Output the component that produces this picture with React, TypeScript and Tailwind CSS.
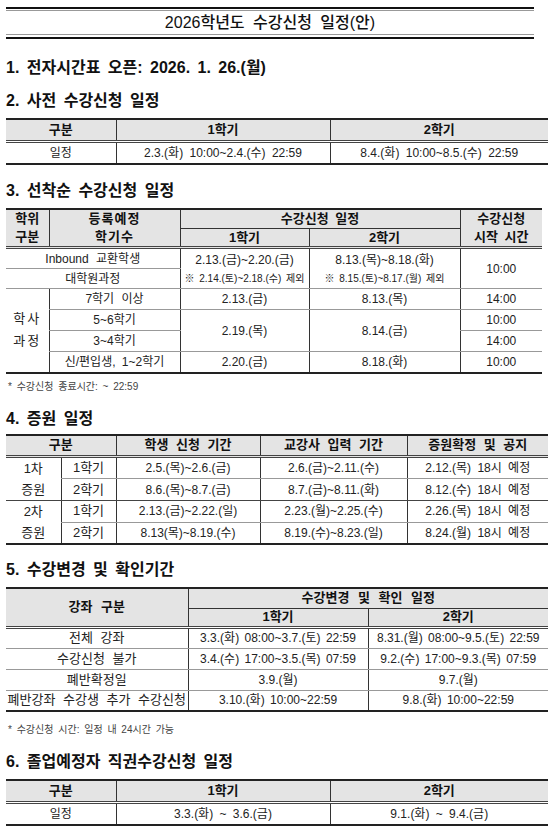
import React from "react";

const F = "font-['Liberation_Sans','Noto_Sans_CJK_KR',sans-serif]";

const TH = "bg-[#e4e4e4] font-bold text-[#111] text-[13px] leading-[16px] text-center align-middle p-0";
const TD = "text-center align-middle p-0 text-[#222] text-[12px] leading-[16px]";
const VL = "border-l border-l-[#333]";
const HB = "border-b-[3px] border-double border-b-[#444]";
const GB = "border-b border-b-[#999]";

function Heading({ children, mt }: { children: React.ReactNode; mt: string }) {
  return (
    <div className={`${mt} h-[20px] leading-[20px] text-[16px] font-semibold text-[#111] [word-spacing:3px]`}>
      {children}
    </div>
  );
}

function Note({ children, mt }: { children: React.ReactNode; mt: string }) {
  return (
    <div className={`${mt} h-[14px] leading-[14px] text-[10px] text-[#444] pl-[2px] [word-spacing:2px]`}>{children}</div>
  );
}

function SimpleTable({ mt, a, b }: { mt: string; a: string; b: string }) {
  return (
    <table className={`${mt} w-[542px] table-fixed border-collapse border-t-2 border-b-2 border-t-[#222] border-b-[#222]`}>
      <colgroup>
        <col className="w-[110px]" />
        <col className="w-[214px]" />
        <col className="w-[218px]" />
      </colgroup>
      <tbody>
        <tr className="h-[22px]">
          <th className={`${TH} ${HB}`}>구분</th>
          <th className={`${TH} ${HB} ${VL}`}>1학기</th>
          <th className={`${TH} ${HB} ${VL}`}>2학기</th>
        </tr>
        <tr className="h-[23px]">
          <td className={TD}>일정</td>
          <td className={`${TD} ${VL} [word-spacing:3px]`}>{a}</td>
          <td className={`${TD} ${VL} [word-spacing:3px]`}>{b}</td>
        </tr>
      </tbody>
    </table>
  );
}

function Table3() {
  return (
    <table className="mt-[7px] w-[536px] table-fixed border-collapse border-t-2 border-b-2 border-t-[#222] border-b-[#222]">
      <colgroup>
        <col className="w-[43px]" />
        <col className="w-[131px]" />
        <col className="w-[129px]" />
        <col className="w-[151px]" />
        <col className="w-[82px]" />
      </colgroup>
      <tbody>
        <tr className="h-[19px]">
          <th rowSpan={2} className={`${TH} ${HB} !leading-[18px]`}>
            학위
            <br />
            구분
          </th>
          <th rowSpan={2} className={`${TH} ${HB} ${VL} !leading-[18px] tracking-[1px]`}>
            등록예정
            <br />
            학기수
          </th>
          <th colSpan={2} className={`${TH} ${VL} border-b border-b-[#333] [word-spacing:3px]`}>수강신청 일정</th>
          <th rowSpan={2} className={`${TH} ${HB} ${VL} !leading-[18px] [word-spacing:3px]`}>
            수강신청
            <br />
            시작 시간
          </th>
        </tr>
        <tr className="h-[18px]">
          <th className={`${TH} ${HB} ${VL}`}>1학기</th>
          <th className={`${TH} ${HB} ${VL}`}>2학기</th>
        </tr>
        <tr className="h-[21px]">
          <td colSpan={2} className={`${TD} ${GB} [word-spacing:4px]`}>Inbound 교환학생</td>
          <td rowSpan={2} className={`${TD} ${VL} ${GB}`}>
            <div className="leading-[19px]">2.13.(금)~2.20.(금)</div>
            <div className="leading-[17px] text-[10px] [word-spacing:2px]">※ 2.14.(토)~2.18.(수) 제외</div>
          </td>
          <td rowSpan={2} className={`${TD} ${VL} ${GB}`}>
            <div className="leading-[19px]">8.13.(목)~8.18.(화)</div>
            <div className="leading-[17px] text-[10px] [word-spacing:2px]">※ 8.15.(토)~8.17.(월) 제외</div>
          </td>
          <td rowSpan={2} className={`${TD} ${VL} ${GB}`}>10:00</td>
        </tr>
        <tr className="h-[20px]">
          <td colSpan={2} className={`${TD} ${GB}`}>대학원과정</td>
        </tr>
        <tr className="h-[21px]">
          <td rowSpan={4} className={`${TD} !leading-[22px] tracking-[2px] !text-[13px]`}>
            학사
            <br />
            과정
          </td>
          <td className={`${TD} ${VL} ${GB} [word-spacing:4px]`}>7학기 이상</td>
          <td className={`${TD} ${VL} ${GB}`}>2.13.(금)</td>
          <td className={`${TD} ${VL} ${GB}`}>8.13.(목)</td>
          <td className={`${TD} ${VL} ${GB}`}>14:00</td>
        </tr>
        <tr className="h-[21px]">
          <td className={`${TD} ${VL} ${GB}`}>5~6학기</td>
          <td rowSpan={2} className={`${TD} ${VL} ${GB}`}>2.19.(목)</td>
          <td rowSpan={2} className={`${TD} ${VL} ${GB}`}>8.14.(금)</td>
          <td className={`${TD} ${VL} ${GB}`}>10:00</td>
        </tr>
        <tr className="h-[21px]">
          <td className={`${TD} ${VL} ${GB}`}>3~4학기</td>
          <td className={`${TD} ${VL} ${GB}`}>14:00</td>
        </tr>
        <tr className="h-[21px]">
          <td className={`${TD} ${VL} [word-spacing:3px]`}>신/편입생, 1~2학기</td>
          <td className={`${TD} ${VL}`}>2.20.(금)</td>
          <td className={`${TD} ${VL}`}>8.18.(화)</td>
          <td className={`${TD} ${VL}`}>10:00</td>
        </tr>
      </tbody>
    </table>
  );
}

function Table4() {
  const rows = [
    ["1차", "증원", [
      ["1학기", "2.5.(목)~2.6.(금)", "2.6.(금)~2.11.(수)", "2.12.(목) 18시 예정"],
      ["2학기", "8.6.(목)~8.7.(금)", "8.7.(금)~8.11.(화)", "8.12.(수) 18시 예정"],
    ]],
    ["2차", "증원", [
      ["1학기", "2.13.(금)~2.22.(일)", "2.23.(월)~2.25.(수)", "2.26.(목) 18시 예정"],
      ["2학기", "8.13(목)~8.19.(수)", "8.19.(수)~8.23.(일)", "8.24.(월) 18시 예정"],
    ]],
  ] as const;
  return (
    <table className="mt-[5px] w-[542px] table-fixed border-collapse border-t-2 border-b-2 border-t-[#222] border-b-[#222]">
      <colgroup>
        <col className="w-[55px]" />
        <col className="w-[55px]" />
        <col className="w-[144px]" />
        <col className="w-[147px]" />
        <col className="w-[141px]" />
      </colgroup>
      <tbody>
        <tr className="h-[22px]">
          <th colSpan={2} className={`${TH} ${HB}`}>구분</th>
          <th className={`${TH} ${HB} ${VL} [word-spacing:4px]`}>학생 신청 기간</th>
          <th className={`${TH} ${HB} ${VL} [word-spacing:4px]`}>교강사 입력 기간</th>
          <th className={`${TH} ${HB} ${VL} [word-spacing:4px]`}>증원확정 및 공지</th>
        </tr>
        {rows.map((g, gi) =>
          g[2].map((r, ri) => (
            <tr key={`${gi}-${ri}`} className="h-[21px]">
              {ri === 0 && (
                <td rowSpan={2} className={`${TD} !leading-[21px] !text-[13px] ${gi === 0 ? "border-b border-b-[#444]" : ""}`}>
                  {g[0]}
                  <br />
                  {g[1]}
                </td>
              )}
              {r.map((c, ci) => (
                <td
                  key={ci}
                  className={`${TD} ${VL} ${ri === 0 ? GB : gi === 0 ? "border-b border-b-[#444]" : ""} ${ci === 3 ? "[word-spacing:3px]" : ""} ${ci === 0 ? "!text-[13px]" : ""}`}
                >
                  {c}
                </td>
              ))}
            </tr>
          ))
        )}
      </tbody>
    </table>
  );
}

function Table5() {
  const rows = [
    ["전체 강좌", "3.3.(화) 08:00~3.7.(토) 22:59", "8.31.(월) 08:00~9.5.(토) 22:59"],
    ["수강신청 불가", "3.4.(수) 17:00~3.5.(목) 07:59", "9.2.(수) 17:00~9.3.(목) 07:59"],
    ["폐반확정일", "3.9.(월)", "9.7.(월)"],
    ["폐반강좌 수강생 추가 수강신청", "3.10.(화) 10:00~22:59", "9.8.(화) 10:00~22:59"],
  ];
  return (
    <table className="mt-[7px] w-[542px] table-fixed border-collapse border-t-2 border-b-2 border-t-[#222] border-b-[#222]">
      <colgroup>
        <col className="w-[182px]" />
        <col className="w-[180px]" />
        <col className="w-[180px]" />
      </colgroup>
      <tbody>
        <tr className="h-[20px]">
          <th rowSpan={2} className={`${TH} ${HB} [word-spacing:5px]`}>강좌 구분</th>
          <th colSpan={2} className={`${TH} ${VL} border-b border-b-[#333] [word-spacing:5px]`}>수강변경 및 확인 일정</th>
        </tr>
        <tr className="h-[19px]">
          <th className={`${TH} ${HB} ${VL}`}>1학기</th>
          <th className={`${TH} ${HB} ${VL}`}>2학기</th>
        </tr>
        {rows.map((r, i) => (
          <tr key={i} className="h-[21px]">
            <td className={`${TD} !text-[13px] ${i < 3 ? GB : ""} [word-spacing:4px]`}>{r[0]}</td>
            <td className={`${TD} ${VL} ${i < 3 ? GB : ""} [word-spacing:2px]`}>{r[1]}</td>
            <td className={`${TD} ${VL} ${i < 3 ? GB : ""} [word-spacing:2px]`}>{r[2]}</td>
          </tr>
        ))}
      </tbody>
    </table>
  );
}

export default function App() {
  return (
    <div className={`w-[554px] h-[831px] bg-white overflow-hidden pl-[6px] pt-[7px] text-[#222] ${F}`}>
      <div className="w-[528px] border-t-2 border-b-2 border-t-[#111] border-b-[#111] pt-[1px] pb-[2px]">
        <div className="h-[25px] border-t border-b border-t-[#999] border-b-[#999] flex items-center justify-center text-[16px] font-medium text-[#111] [word-spacing:4px]">
          2026학년도 수강신청 일정(안)
        </div>
      </div>

      <Heading mt="mt-[19px]">1. 전자시간표 오픈: 2026. 1. 26.(월)</Heading>
      <Heading mt="mt-[13px]">2. 사전 수강신청 일정</Heading>
      <SimpleTable mt="mt-[7px]" a="2.3.(화) 10:00~2.4.(수) 22:59" b="8.4.(화) 10:00~8.5.(수) 22:59" />

      <Heading mt="mt-[16px]">3. 선착순 수강신청 일정</Heading>
      <Table3 />
      <Note mt="mt-[6px]">* 수강신청 종료시간: ~ 22:59</Note>

      <Heading mt="mt-[15px]">4. 증원 일정</Heading>
      <Table4 />

      <Heading mt="mt-[15px]">5. 수강변경 및 확인기간</Heading>
      <Table5 />
      <Note mt="mt-[11px]">* 수강신청 시간: 일정 내 24시간 가능</Note>

      <Heading mt="mt-[15px]">6. 졸업예정자 직권수강신청 일정</Heading>
      <SimpleTable mt="mt-[7px]" a="3.3.(화) ~ 3.6.(금)" b="9.1.(화) ~ 9.4.(금)" />
    </div>
  );
}
